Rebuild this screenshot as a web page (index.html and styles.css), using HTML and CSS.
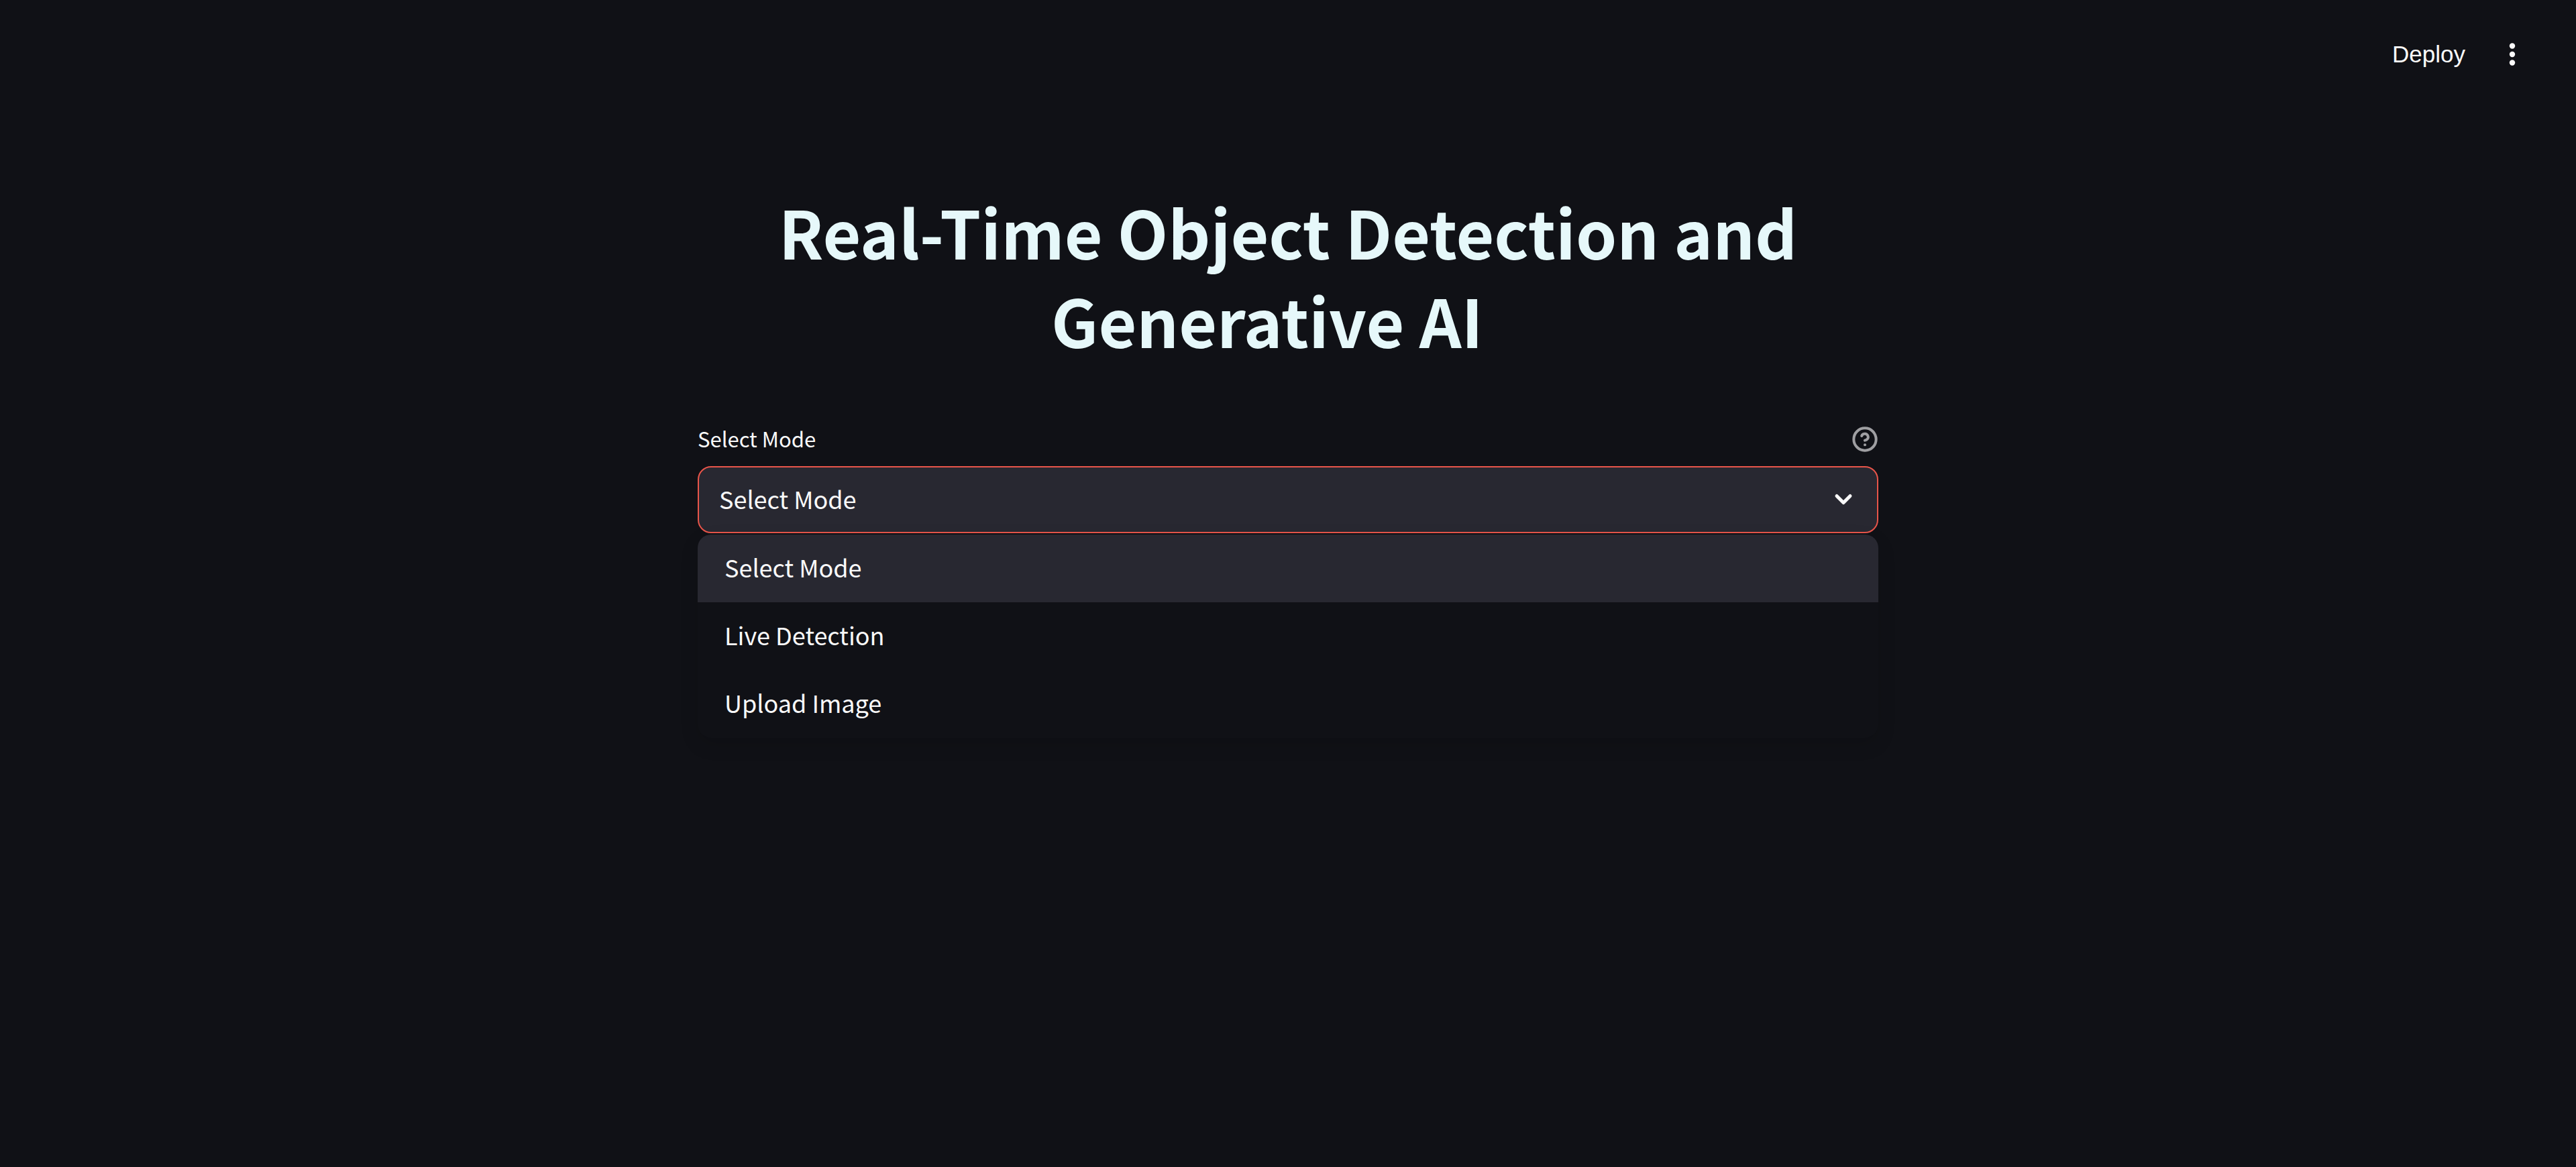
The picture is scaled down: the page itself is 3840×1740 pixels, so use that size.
FILE: index.html
```html
<!DOCTYPE html>
<html lang="en">
<head>
<meta charset="utf-8">
<meta name="viewport" content="width=device-width, initial-scale=1">
<title>Real-Time Object Detection and Generative AI</title>
<link rel="stylesheet" href="styles.css">
</head>
<body>
<header class="toolbar">
  <button class="deploy" type="button">Deploy</button>
  <button class="more" type="button" aria-label="Main menu">
    <svg class="more-icon" viewBox="0 0 50 50" aria-hidden="true">
      <circle cx="25" cy="12.500" r="4.200"/><circle cx="25" cy="25" r="4.200"/><circle cx="25" cy="37.500" r="4.200"/>
    </svg>
  </button>
</header>
<main class="content">
  <h1 class="title">Real-Time Object Detection and Generative AI<span class="anchor"></span></h1>
  <div class="field">
    <div class="field-head">
      <label class="field-label" for="mode">Select Mode</label>
      <button class="help" type="button" aria-label="Help">
        <svg class="help-icon" viewBox="0 0 24 24" aria-hidden="true">
          <circle cx="12" cy="12" r="10"/>
          <path d="M9.090 9a3 3 0 0 1 5.830 1c0 2-3 3-3 3"/>
          <path d="M12 17h.01"/>
        </svg>
      </button>
    </div>
    <div class="control">
      <select class="select" id="mode">
        <option>Select Mode</option>
        <option>Live Detection</option>
        <option>Upload Image</option>
      </select>
      <svg class="chevron" viewBox="0 0 40 40" aria-hidden="true"><path d="M10 14.500l10 10 10-10"/></svg>
      <ul class="menu" role="listbox" aria-label="Select Mode">
        <li class="option option-active" role="option" aria-selected="true">Select Mode</li>
        <li class="option" role="option" aria-selected="false">Live Detection</li>
        <li class="option" role="option" aria-selected="false">Upload Image</li>
      </ul>
    </div>
  </div>
</main>
</body>
</html>
```
FILE: styles.css
```css
* { box-sizing: border-box; }

body {
  margin: 0;
  min-height: 100vh;
  background: #101116;
  color: #fafafa;
  font-family: "Noto Sans CJK SC", "Noto Sans", sans-serif;
  font-size: 36px;
}

button {
  padding: 0;
  border: 0;
  background: none;
  color: inherit;
  cursor: pointer;
}

.toolbar {
  display: flex;
  align-items: center;
  justify-content: flex-end;
  gap: 45px;
  height: 162px;
  padding: 0 70px;
}

.deploy {
  font: 35px/56px "Liberation Sans", Arial, sans-serif;
}

.more,
.more-icon {
  display: block;
  width: 50px;
  height: 50px;
}

.more-icon { fill: currentColor; }

.content {
  max-width: 1840px;
  margin: 0 auto;
  padding: 116px 40px 200px;
}

.title {
  margin: 0;
  color: #e6f8fa;
  font-size: 98px;
  font-weight: 700;
  line-height: 132px;
  text-align: center;
}

.anchor {
  display: inline-block;
  width: 62px;
}

.field { margin-top: 83px; }

.field-head {
  display: flex;
  align-items: center;
  justify-content: space-between;
  height: 60px;
  margin-bottom: 10px;
}

.field-label {
  padding-bottom: 2px;
  font-size: 31px;
  line-height: 56px;
}

.help,
.help-icon {
  display: block;
  width: 40px;
  height: 40px;
}

.help-icon {
  fill: none;
  stroke: #9f9fa2;
  stroke-width: 2.400;
  stroke-linecap: round;
  stroke-linejoin: round;
}

.control { position: relative; }

.select {
  display: block;
  width: 100%;
  height: 100px;
  padding: 0 90px 4px 30px;
  border: 2px solid #e8554a;
  border-radius: 20px;
  outline: 0;
  appearance: none;
  background: #282831;
  color: inherit;
  font: inherit;
}

.chevron {
  position: absolute;
  top: 30px;
  right: 32px;
  width: 40px;
  height: 40px;
  fill: none;
  stroke: currentColor;
  stroke-width: 5;
  stroke-linecap: round;
  stroke-linejoin: round;
  pointer-events: none;
}

.menu {
  position: absolute;
  top: calc(100% + 2px);
  left: 0;
  right: 0;
  margin: 0;
  padding: 0;
  overflow: hidden;
  border-radius: 20px;
  background: #101116;
  box-shadow: 0 10px 28px rgba(0, 0, 0, 0.12);
  list-style: none;
}

.option {
  padding: 0 40px 4px;
  line-height: 97px;
}

.option-active { background: #282831; }
```
